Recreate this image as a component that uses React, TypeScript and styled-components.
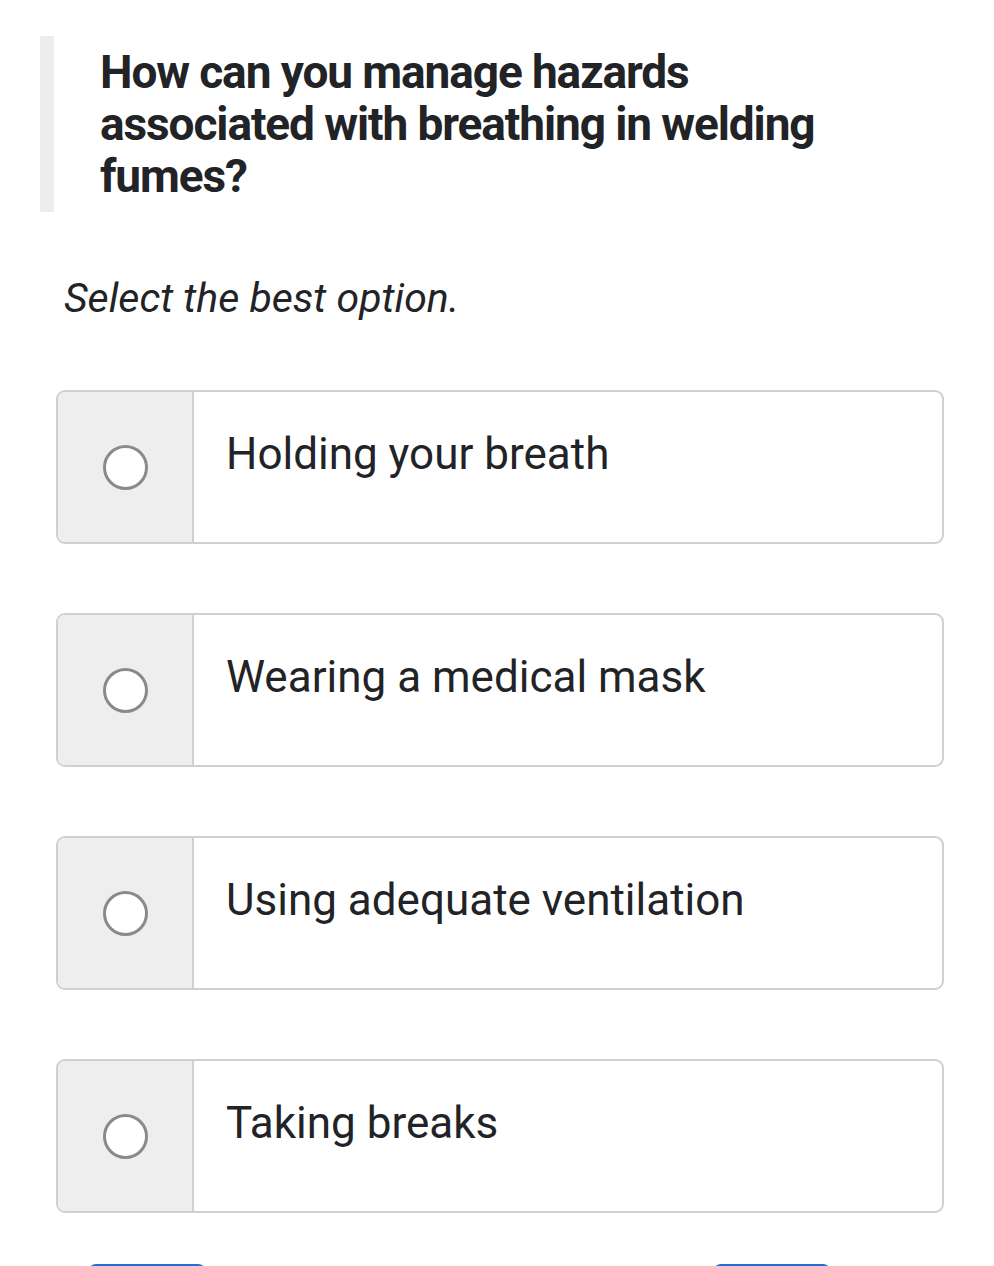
import React from "react";
import styled, { createGlobalStyle } from "styled-components";

const Global = createGlobalStyle`
  html, body { margin: 0; padding: 0; background: #ffffff; }
  body { font-family: Roboto, "Liberation Sans", sans-serif; color: #222326; }
`;

const Page = styled.div`
  width: 994px;
  height: 1266px;
  overflow: hidden;
  padding-top: 36px;
  box-sizing: border-box;
`;

const QuestionBlock = styled.div`
  margin-left: 40px;
  border-left: 14px solid #ededed;
  padding: 10px 0 8px 46px;
  height: 176px;
  box-sizing: border-box;
`;

const Title = styled.h1`
  margin: 0;
  font-family: Roboto, sans-serif;
  font-weight: 700;
  font-size: 46px;
  line-height: 52px;
  letter-spacing: -1.1px;
  color: #222326;
  max-width: 760px;
`;

const Instruction = styled.p`
  margin: 64px 0 0 64px;
  font-style: italic;
  font-size: 41px;
  line-height: 44px;
  color: #222326;
`;

const Options = styled.div`
  margin: 70px 0 0 56px;
  width: 888px;
  display: flex;
  flex-direction: column;
  gap: 69px;
`;

const Card = styled.label`
  display: flex;
  height: 154px;
  box-sizing: border-box;
  border: 2px solid #d0d0d0;
  border-radius: 9px;
  overflow: hidden;
  background: #fff;
  cursor: pointer;
`;

const RadioCell = styled.div`
  width: 134px;
  flex: none;
  background: #eeeeef;
  border-right: 2px solid #d0d0d0;
  display: flex;
  align-items: center;
  justify-content: center;
`;

const Radio = styled.span`
  width: 39px;
  height: 39px;
  border-radius: 50%;
  border: 3px solid #8a8a8c;
  background: #fff;
`;

const OptionText = styled.div`
  padding: 37px 0 0 32px;
  font-size: 44px;
  line-height: 50px;
  color: #222326;
`;

const ButtonRow = styled.div`
  display: flex;
  margin-top: 51px;
  padding-left: 88px;
  gap: 507px;
`;

const NavButton = styled.div`
  width: 118px;
  height: 40px;
  border-radius: 8px;
  background: #1f6fd1;
`;

const options = [
  "Holding your breath",
  "Wearing a medical mask",
  "Using adequate ventilation",
  "Taking breaks",
];

export default function App() {
  return (
    <>
      <Global />
      <Page>
        <QuestionBlock>
          <Title>How can you manage hazards associated with breathing in welding fumes?</Title>
        </QuestionBlock>
        <Instruction>Select the best option.</Instruction>
        <Options>
          {options.map((o) => (
            <Card key={o}>
              <RadioCell>
                <Radio />
              </RadioCell>
              <OptionText>{o}</OptionText>
            </Card>
          ))}
        </Options>
        <ButtonRow>
          <NavButton />
          <NavButton />
        </ButtonRow>
      </Page>
    </>
  );
}
